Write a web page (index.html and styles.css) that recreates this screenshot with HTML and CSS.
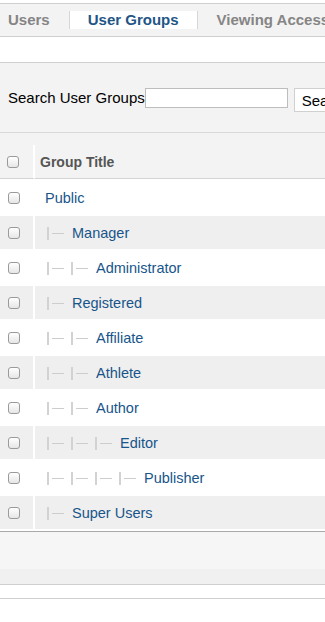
FILE: index.html
```html
<!DOCTYPE html>
<html lang="en">
<head>
  <meta charset="UTF-8" />
  <meta name="viewport" content="width=device-width, initial-scale=1.0" />
  <title>User Groups</title>
  <link rel="stylesheet" href="styles.css">
</head>
<body>
  <div class="submenu-box">
    <ul class="submenu">
      <li><a href="#">Users</a></li>
      <li class="active"><a href="#">User Groups</a></li>
      <li><a href="#">Viewing Access</a></li>
    </ul>
  </div>

  <div class="toolbar-space"></div>

  <form id="adminForm">
    <fieldset class="filter-bar">
      <label for="filter_search">Search User Groups</label>
      <input type="text" id="filter_search">
      <button type="button">Search</button>
    </fieldset>

    <div class="list-wrap">
      <table class="adminlist">
        <thead>
          <tr>
            <th class="check"><input type="checkbox"></th>
            <th class="title">Group Title</th>
          </tr>
        </thead>
        <tbody>
          <tr class="row0">
            <td class="check"><input type="checkbox"></td>
            <td><a href="#">Public</a></td>
          </tr>
          <tr class="row1">
            <td class="check"><input type="checkbox"></td>
            <td><span class="gi"></span><a href="#">Manager</a></td>
          </tr>
          <tr class="row0">
            <td class="check"><input type="checkbox"></td>
            <td><span class="gi"></span><span class="gi"></span><a href="#">Administrator</a></td>
          </tr>
          <tr class="row1">
            <td class="check"><input type="checkbox"></td>
            <td><span class="gi"></span><a href="#">Registered</a></td>
          </tr>
          <tr class="row0">
            <td class="check"><input type="checkbox"></td>
            <td><span class="gi"></span><span class="gi"></span><a href="#">Affiliate</a></td>
          </tr>
          <tr class="row1">
            <td class="check"><input type="checkbox"></td>
            <td><span class="gi"></span><span class="gi"></span><a href="#">Athlete</a></td>
          </tr>
          <tr class="row0">
            <td class="check"><input type="checkbox"></td>
            <td><span class="gi"></span><span class="gi"></span><a href="#">Author</a></td>
          </tr>
          <tr class="row1">
            <td class="check"><input type="checkbox"></td>
            <td><span class="gi"></span><span class="gi"></span><span class="gi"></span><a href="#">Editor</a></td>
          </tr>
          <tr class="row0">
            <td class="check"><input type="checkbox"></td>
            <td><span class="gi"></span><span class="gi"></span><span class="gi"></span><span class="gi"></span><a href="#">Publisher</a></td>
          </tr>
          <tr class="row1">
            <td class="check"><input type="checkbox"></td>
            <td><span class="gi"></span><a href="#">Super Users</a></td>
          </tr>
        </tbody>
      </table>
    </div>

    <div class="list-footer"></div>
    <div class="bottom-space"></div>
  </form>
</body>
</html>
```

FILE: styles.css
```css
:root {
  --bar: #f3f3f3;
  --line: #cfcfcf;
  --link: #18558a;
  --row-alt: #efefef;
  --marker: #d2d2d2;
}

body {
  font-family: 'Liberation Sans', Arial, sans-serif;
  margin: 0;
  padding-top: 3px;
  background: #ffffff;
  color: #000;
  overflow: hidden;
}

/* tabs */
.submenu-box {
  background: var(--bar);
  border-top: 1px solid var(--line);
  border-bottom: 1px solid var(--line);
  height: 32px;
  overflow: hidden;
}

.submenu {
  list-style: none;
  margin: 0;
  padding: 7px 0 0;
  display: flex;
  white-space: nowrap;
}

.submenu li {
  border-left: 1px solid #d6d6d6;
}

.submenu li:first-child {
  border-left: none;
}

.submenu a {
  display: block;
  line-height: 18px;
  padding: 0 19px;
  font-size: 15px;
  font-weight: bold;
  color: #858585;
  text-decoration: none;
}

.submenu li:first-child a {
  padding-left: 8px;
}

.submenu li.active a {
  background: #ffffff;
  color: #1f5686;
  padding: 0 18px;
}

.toolbar-space {
  height: 25px;
  border-bottom: 1px solid var(--line);
}

/* search */
.filter-bar {
  margin: 0;
  border: none;
  border-bottom: 1px solid #d9d9d9;
  background: var(--bar);
  height: 44px;
  padding: 25px 0 0 8px;
  display: flex;
  align-items: flex-start;
  white-space: nowrap;
  overflow: hidden;
}

.filter-bar label {
  font-size: 15px;
  line-height: 20px;
}

.filter-bar input {
  width: 143px;
  height: 20px;
  margin: 0;
  padding: 0 3px;
  border: 1px solid #bdbdbd;
  box-sizing: border-box;
  font-size: 13px;
}

.filter-bar button {
  height: 24px;
  margin-left: 6px;
  padding: 0 7px;
  border: 1px solid #d0d0d0;
  background: #ffffff;
  font-family: inherit;
  font-size: 15px;
  color: #000;
  flex-shrink: 0;
}

/* list */
.list-wrap {
  background: var(--bar);
  padding-top: 12px;
}

.adminlist {
  width: 100%;
  border-collapse: separate;
  border-spacing: 0;
  font-size: 14.5px;
}

.adminlist th {
  height: 33px;
  padding: 0 5px;
  text-align: left;
  color: #555;
  font-size: 14px;
  font-weight: bold;
  border-bottom: 1px solid #d4d4d4;
}

.adminlist th.check {
  padding: 0 0 0 7px;
}

.adminlist .check {
  width: 25px;
  border-right: 2px solid #ffffff;
}

.adminlist td {
  height: 33px;
  padding: 0 0 0 10px;
  border-top: 2px solid #ffffff;
  background: #ffffff;
}

.adminlist td.check {
  padding-left: 8px;
}

.adminlist tr:last-child td {
  border-bottom: 2px solid #ffffff;
}

.adminlist tr.row1 td {
  background: var(--row-alt);
}

.adminlist a {
  color: var(--link);
  text-decoration: none;
  vertical-align: middle;
}

.adminlist input[type=checkbox] {
  appearance: none;
  -webkit-appearance: none;
  display: block;
  width: 12px;
  height: 12px;
  margin: 0;
  border: 1px solid #9a9a9a;
  border-radius: 3px;
  background: linear-gradient(#ffffff, #e6e6e6);
  box-sizing: border-box;
}

/* tree level marker |— */
.gi {
  display: inline-block;
  width: 17px;
  height: 13px;
  margin-left: 2px;
  margin-right: 5px;
  vertical-align: middle;
  border-left: 2px solid var(--marker);
  box-sizing: border-box;
  background: linear-gradient(#cdcdcd, #cdcdcd) no-repeat 3px 6px / 13px 1px;
}

.gi:last-of-type {
  margin-right: 8px;
}

.list-footer {
  height: 52px;
  border-top: 1px solid #a9a9a9;
  border-bottom: 1px solid var(--line);
  background: linear-gradient(#f6f6f6 0, #f6f6f6 72%, #f0f0f0 72%);
}

.bottom-space {
  height: 13px;
  border-bottom: 1px solid var(--line);
}
```
